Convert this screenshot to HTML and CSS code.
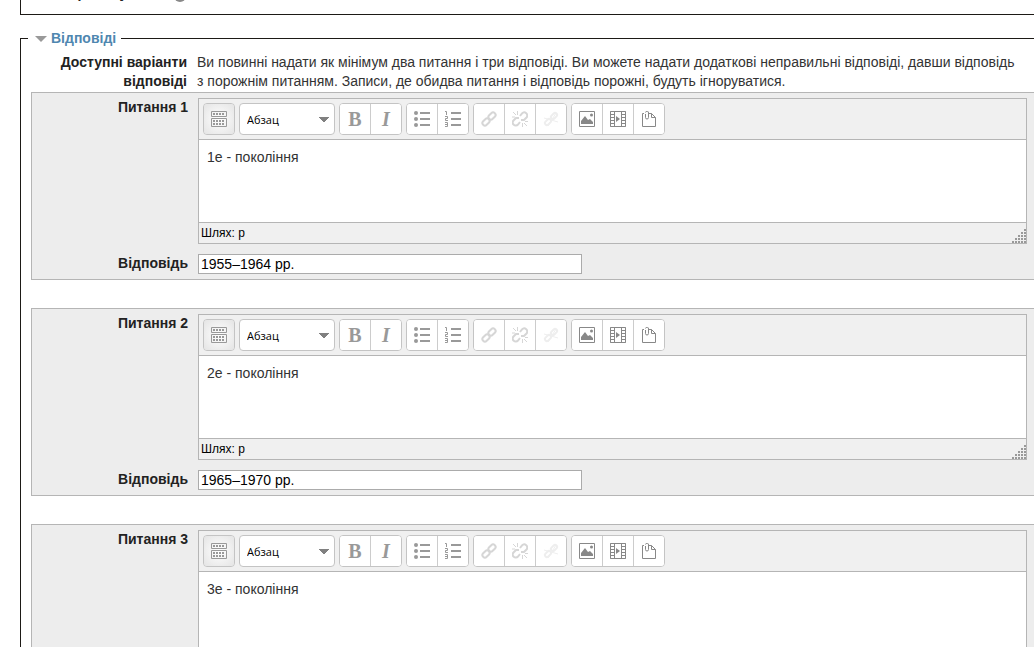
FILE: index.html
```html
<!DOCTYPE html>
<html lang="uk">
<head>
<meta charset="utf-8">
<title>Відповіді</title>
<link rel="stylesheet" href="styles.css">
</head>
<body>
<svg class="sprite" aria-hidden="true">
  <symbol id="i-toggle" viewBox="0 0 16 16"><path d="M.5.5h15v5H.5zM.5 7.500h15v8H.5z" fill="none" stroke="#999"/><path d="M2 3h12M2 10h12M2 13h2M5 13h5M11 13h3" stroke="#999" stroke-width="2" stroke-dasharray="2 1"/></symbol>
  <symbol id="i-ul" viewBox="0 0 16 16"><g fill="#999"><circle cx="2" cy="2" r="2"/><circle cx="2" cy="8" r="2"/><circle cx="2" cy="14" r="2"/><path d="M6 1h10v2H6zM6 7h10v2H6zM6 13h10v2H6z"/></g></symbol>
  <symbol id="i-ol" viewBox="0 0 16 16"><path d="M6 1h10v2H6zM6 7h10v2H6zM6 13h10v2H6z" fill="#999"/><path d="M0 .5h1.500V4M0 5.500h2.500v2h-2v2H3M0 11.500h2.500v4H0M0 13.500h2.500" fill="none" stroke="#999"/></symbol>
  <symbol id="i-link" viewBox="0 0 16 16"><g fill="none" stroke="#d6d6d6" stroke-width="2"><rect x="-4" y="-2.500" width="8" height="5" rx="2.500" transform="translate(11 5) rotate(-45)"/><rect x="-4" y="-2.500" width="8" height="5" rx="2.500" transform="translate(5 11) rotate(-45)"/></g></symbol>
  <symbol id="i-unlink" viewBox="0 0 16 16"><g fill="none" stroke="#d6d6d6" stroke-width="2"><path d="M8 5l2-2.500a2.800 2.800 0 0 1 4.500 4L12 9H9M8 11l-2 2.500a2.800 2.800 0 0 1-4.500-4L4 7h3"/><path d="M5.500 0v4M1 1l3 3M0 6h3M10.500 12v4M12 12l3 3M13 10.500h3" stroke-width="1"/></g></symbol>
  <symbol id="i-nolink" viewBox="0 0 16 16"><g fill="none" stroke="#eee" stroke-width="2"><rect x="-3.500" y="-2" width="7" height="4" rx="2" transform="translate(11 5) rotate(-45)"/><rect x="-3.500" y="-2" width="7" height="4" rx="2" transform="translate(5 11) rotate(-45)"/><path d="M1 7l14 4M5 15l8-13" stroke-width="1"/></g></symbol>
  <symbol id="i-image" viewBox="0 0 16 16"><path d="M.5.500h15v15H.5z" fill="none" stroke="#888"/><path d="M2 13v-3l4-5 3 4 2-1 3 3v2z" fill="#888"/><circle cx="12.500" cy="4" r="1.500" fill="#888"/></symbol>
  <symbol id="i-media" viewBox="0 0 16 16"><path d="M.5.500h15v15H.5zM4.500.500v15M11.500.500v15" fill="none" stroke="#888"/><path d="M2.500 0v16M13.500 0v16" stroke="#888" stroke-width="4" stroke-dasharray="1 2"/><path d="M6 5l4 3-4 3z" fill="#888"/></symbol>
  <symbol id="i-files" viewBox="0 0 16 16"><path d="M3 2.500H1.500v13h13v-9l-4-4H8M10.500 2.500v4h4" fill="none" stroke="#888"/><path d="M4.500 3v3.500a1.500 1.500 0 0 0 3 0V2a1.500 1.500 0 0 0-3-.5" fill="none" stroke="#888"/></symbol>
  <symbol id="i-grip" viewBox="0 0 14 14"><path d="M12 1h2M9 4h5M6 7h8M3 10h11M0 13h14" stroke="#999" stroke-width="2" stroke-dasharray="2 1"/></symbol>
</svg>

<main class="page">
  <fieldset class="section section-prev">
    <div class="row">
      <span class="label">Перемішувати</span>
      <button class="help" type="button" aria-label="Довідка"></button>
    </div>
  </fieldset>

  <fieldset class="section section-answers">
    <legend class="legend"><a class="legend-link" href="#answers"><span class="caret"></span>Відповіді</a></legend>
    <div class="row intro" id="answers">
      <div class="label">Доступні варіанти відповіді</div>
      <div class="text">Ви повинні надати як мінімум два питання і три відповіді. Ви можете надати додаткові неправильні відповіді, давши відповідь з порожнім питанням. Записи, де обидва питання і відповідь порожні, будуть ігноруватися.</div>
    </div>

    <section class="group">
      <div class="row">
        <label class="label" for="q1">Питання 1</label>
        <div class="editor">
          <div class="toolbar">
            <div class="buttons"><button class="btn active" type="button" aria-label="Панель"><svg><use href="#i-toggle"/></svg></button></div>
            <select class="format" aria-label="Формат"><option>Абзац</option></select>
            <div class="buttons"><button class="btn bold" type="button">B</button><button class="btn italic" type="button">I</button></div>
            <div class="buttons"><button class="btn" type="button" aria-label="Список"><svg><use href="#i-ul"/></svg></button><button class="btn" type="button" aria-label="Нумерація"><svg><use href="#i-ol"/></svg></button></div>
            <div class="buttons"><button class="btn" type="button" aria-label="Посилання"><svg><use href="#i-link"/></svg></button><button class="btn" type="button" aria-label="Вилучити посилання"><svg><use href="#i-unlink"/></svg></button><button class="btn" type="button" aria-label="Без автопосилань"><svg><use href="#i-nolink"/></svg></button></div>
            <div class="buttons"><button class="btn" type="button" aria-label="Зображення"><svg><use href="#i-image"/></svg></button><button class="btn" type="button" aria-label="Медіа"><svg><use href="#i-media"/></svg></button><button class="btn" type="button" aria-label="Файли"><svg><use href="#i-files"/></svg></button></div>
          </div>
          <textarea class="content" id="q1">1е - покоління</textarea>
          <div class="status"><span>Шлях: p</span><svg class="grip"><use href="#i-grip"/></svg></div>
        </div>
      </div>
      <div class="row">
        <label class="label" for="a1">Відповідь</label>
        <input class="answer" id="a1" type="text" value="1955–1964 рр.">
      </div>
    </section>

    <section class="group">
      <div class="row">
        <label class="label" for="q2">Питання 2</label>
        <div class="editor">
          <div class="toolbar">
            <div class="buttons"><button class="btn active" type="button" aria-label="Панель"><svg><use href="#i-toggle"/></svg></button></div>
            <select class="format" aria-label="Формат"><option>Абзац</option></select>
            <div class="buttons"><button class="btn bold" type="button">B</button><button class="btn italic" type="button">I</button></div>
            <div class="buttons"><button class="btn" type="button" aria-label="Список"><svg><use href="#i-ul"/></svg></button><button class="btn" type="button" aria-label="Нумерація"><svg><use href="#i-ol"/></svg></button></div>
            <div class="buttons"><button class="btn" type="button" aria-label="Посилання"><svg><use href="#i-link"/></svg></button><button class="btn" type="button" aria-label="Вилучити посилання"><svg><use href="#i-unlink"/></svg></button><button class="btn" type="button" aria-label="Без автопосилань"><svg><use href="#i-nolink"/></svg></button></div>
            <div class="buttons"><button class="btn" type="button" aria-label="Зображення"><svg><use href="#i-image"/></svg></button><button class="btn" type="button" aria-label="Медіа"><svg><use href="#i-media"/></svg></button><button class="btn" type="button" aria-label="Файли"><svg><use href="#i-files"/></svg></button></div>
          </div>
          <textarea class="content" id="q2">2е - покоління</textarea>
          <div class="status"><span>Шлях: p</span><svg class="grip"><use href="#i-grip"/></svg></div>
        </div>
      </div>
      <div class="row">
        <label class="label" for="a2">Відповідь</label>
        <input class="answer" id="a2" type="text" value="1965–1970 рр.">
      </div>
    </section>

    <section class="group">
      <div class="row">
        <label class="label" for="q3">Питання 3</label>
        <div class="editor">
          <div class="toolbar">
            <div class="buttons"><button class="btn active" type="button" aria-label="Панель"><svg><use href="#i-toggle"/></svg></button></div>
            <select class="format" aria-label="Формат"><option>Абзац</option></select>
            <div class="buttons"><button class="btn bold" type="button">B</button><button class="btn italic" type="button">I</button></div>
            <div class="buttons"><button class="btn" type="button" aria-label="Список"><svg><use href="#i-ul"/></svg></button><button class="btn" type="button" aria-label="Нумерація"><svg><use href="#i-ol"/></svg></button></div>
            <div class="buttons"><button class="btn" type="button" aria-label="Посилання"><svg><use href="#i-link"/></svg></button><button class="btn" type="button" aria-label="Вилучити посилання"><svg><use href="#i-unlink"/></svg></button><button class="btn" type="button" aria-label="Без автопосилань"><svg><use href="#i-nolink"/></svg></button></div>
            <div class="buttons"><button class="btn" type="button" aria-label="Зображення"><svg><use href="#i-image"/></svg></button><button class="btn" type="button" aria-label="Медіа"><svg><use href="#i-media"/></svg></button><button class="btn" type="button" aria-label="Файли"><svg><use href="#i-files"/></svg></button></div>
          </div>
          <textarea class="content" id="q3">3е - покоління</textarea>
        </div>
      </div>
    </section>
  </fieldset>
</main>
</body>
</html>
```

FILE: styles.css
```css
* { box-sizing: border-box; }
body {
  margin: 0;
  background: #fff;
  color: #222;
  font: 14px/19px "Liberation Sans", Arial, sans-serif;
  overflow: hidden;
}
.sprite { display: none; }
.page { padding-left: 20px; }
.section {
  min-width: 0;
  margin: 0;
  padding: 0 0 0 10px;
  border: 1px solid #1d1a16;
  border-right: 0;
}
.section-prev {
  border-top: 0;
  padding-bottom: 11px;
  margin-bottom: 14px;
}
.section-prev .row { margin-top: -16px; }
.section-prev .label { width: 128px; margin-right: 15px; }
.help {
  width: 12px;
  height: 12px;
  margin-top: 6px;
  padding: 0;
  border: 0;
  border-radius: 6px;
  background: #888;
}
.legend { padding: 0 5px 0 7px; margin-left: -3px; line-height: 19px; }
.legend-link {
  display: flex;
  align-items: center;
  gap: 4px;
  color: #4f87b0;
  font-weight: bold;
  text-decoration: none;
}
.caret {
  border: 6px solid transparent;
  border-top-color: #999;
  border-bottom: 0;
}
.row { display: flex; }
.label {
  flex: none;
  width: 156px;
  margin-right: 10px;
  text-align: right;
  font-weight: bold;
}
.intro { padding: 5px 14px 1px 0; }
.intro .text { flex: 1; color: #333; }
.group {
  display: flex;
  flex-direction: column;
  gap: 10px;
  margin-bottom: 28px;
  padding: 5px 7px 5px 0;
  background: #ededed;
  border: 1px solid #b5b5b5;
  border-right: 0;
}
.group:last-child { margin-bottom: 0; }
.editor {
  flex: 1;
  min-width: 0;
  border: 1px solid #b5b5b5;
  background: #f0f0f0;
}
.toolbar {
  display: flex;
  gap: 4px;
  padding: 4px;
  border-bottom: 1px solid #b5b5b5;
}
.buttons {
  display: flex;
  overflow: hidden;
  border: 1px solid #c4c4c4;
  border-radius: 4px;
  background: #fff;
}
.btn {
  display: flex;
  align-items: center;
  justify-content: center;
  width: 30px;
  height: 30px;
  padding: 0;
  border: 0;
  background: #fff;
  color: #999;
}
.btn + .btn { width: 31px; border-left: 1px solid #ccc; }
.btn svg { width: 16px; height: 16px; }
.btn.active { background: radial-gradient(#fff, #e4e4e4); }
.bold { font: bold 20px "Liberation Serif", serif; }
.italic { font: italic bold 20px "Liberation Serif", serif; }
.format {
  width: 96px;
  height: 32px;
  padding: 0 7px;
  appearance: none;
  border: 1px solid #c4c4c4;
  border-radius: 4px;
  background: linear-gradient(to bottom right, #808080 50%, transparent 50%) 84px 13px / 5px 6px no-repeat, linear-gradient(to bottom left, #808080 50%, transparent 50%) 79px 13px / 5px 6px no-repeat, #fff;
  color: #000;
  font: 11px "Open Sans", sans-serif;
}
.content {
  display: block;
  width: 100%;
  height: 82px;
  padding: 8px;
  border: 0;
  resize: none;
  background: #fff;
  color: #333;
  font: 14px/19px "Liberation Sans", Arial, sans-serif;
}
.status {
  display: flex;
  justify-content: space-between;
  align-items: flex-end;
  height: 21px;
  padding-left: 2px;
  border-top: 1px solid #b5b5b5;
  color: #000;
  font-size: 12px;
  line-height: 20px;
}
.grip { width: 14px; height: 14px; }
.answer {
  width: 384px;
  height: 20px;
  padding: 0 2px;
  border: 1px solid #ababab;
  border-radius: 0;
  background: #fff;
  color: #000;
  font: 14px "Liberation Sans", Arial, sans-serif;
}
```
